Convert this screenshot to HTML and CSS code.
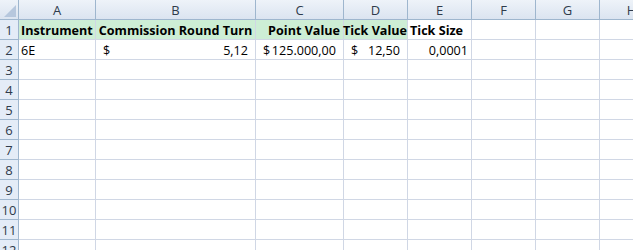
FILE: index.html
```html
<!DOCTYPE html>
<html lang="en">
<head>
  <meta charset="UTF-8">
  <title>Sheet1</title>
  <link rel="stylesheet" href="styles.css">
</head>
<body>

  <div class="sheet" id="sheet">
    <div class="corner"><span class="corner-mark"></span></div>
    <div class="col-head">A</div>
    <div class="col-head">B</div>
    <div class="col-head">C</div>
    <div class="col-head">D</div>
    <div class="col-head">E</div>
    <div class="col-head">F</div>
    <div class="col-head">G</div>
    <div class="col-head">H</div>

    <div class="row-head">1</div>
    <div class="cell bold fill">Instrument</div>
    <div class="cell bold fill center">Commission Round Turn</div>
    <div class="cell bold fill right">Point Value</div>
    <div class="cell bold fill right flush">Tick Value</div>
    <div class="cell bold">Tick Size</div>
    <div class="cell"></div>
    <div class="cell"></div>
    <div class="cell"></div>

    <div class="row-head">2</div>
    <div class="cell">6E</div>
    <div class="cell money"><span>$</span><span>5,12</span></div>
    <div class="cell money"><span>$</span><span>125.000,00</span></div>
    <div class="cell money"><span>$</span><span>12,50</span></div>
    <div class="cell right">0,0001</div>
    <div class="cell"></div>
    <div class="cell"></div>
    <div class="cell"></div>
  </div>

  <script>
    // empty rows 3..12
    const sheet = document.getElementById('sheet');
    for (let r = 3; r <= 12; r++) {
      const head = document.createElement('div');
      head.className = 'row-head';
      head.textContent = r;
      sheet.appendChild(head);
      for (let c = 0; c < 8; c++) {
        const cell = document.createElement('div');
        cell.className = 'cell';
        sheet.appendChild(cell);
      }
    }
  </script>

</body>
</html>
```

FILE: styles.css
```css
* {
  box-sizing: border-box;
}

body {
  margin: 0;
  background: #fff;
  overflow: hidden;
  font-family: 'Open Sans', 'Noto Sans', sans-serif;
  font-size: 12.6px;
  color: #000;
}

.sheet {
  display: grid;
  grid-template-columns: 19px 77px 160px 88px 64px 64px 64px 64px 64px;
  grid-auto-rows: 20px;
  width: 664px;
}

.corner,
.col-head {
  background: linear-gradient(#eef3f9, #dbe4f0);
  border-right: 1px solid #9eb6ce;
  border-bottom: 1px solid #9eb6ce;
}

.corner {
  position: relative;
}

.corner-mark {
  position: absolute;
  right: 2px;
  bottom: 2px;
  width: 0;
  height: 0;
  border-left: 12px solid transparent;
  border-bottom: 12px solid #b6c7dd;
}

.col-head {
  display: flex;
  align-items: center;
  justify-content: center;
  color: #2f3b4b;
  font-size: 13px;
}

.row-head {
  display: flex;
  align-items: center;
  justify-content: center;
  background: #e4ecf7;
  border-right: 1px solid #9eb6ce;
  border-bottom: 1px solid #9eb6ce;
  color: #2f3b4b;
  font-size: 13px;
  padding-top: 1px;
}

.cell {
  display: flex;
  align-items: center;
  padding: 1px 2px 0;
  border-right: 1px solid #d0d7e5;
  border-bottom: 1px solid #d0d7e5;
  white-space: nowrap;
}

.bold {
  font-weight: 700;
}

.fill {
  background: #cdeed5;
}

.center {
  justify-content: center;
}

.right {
  justify-content: flex-end;
  padding-right: 3px;
}

.right.flush {
  padding-right: 0;
}

.money {
  justify-content: space-between;
  padding: 1px 7px 0;
}
```
